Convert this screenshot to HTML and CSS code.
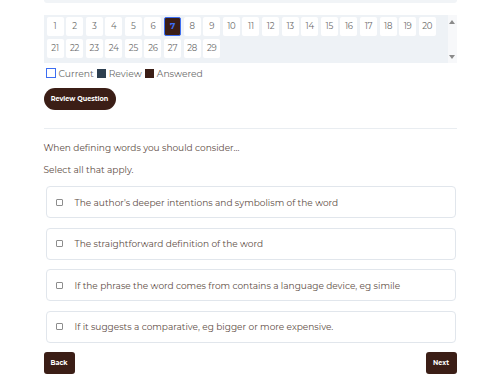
FILE: index.html
```html
<!DOCTYPE html>
<html lang="en">
<head>
    <meta charset="UTF-8">
    <title>Question 7</title>
    <link rel="stylesheet" href="styles.css">
</head>
<body>
<div class="page">
    <div class="topbar"></div>

    <div class="nav">
        <div class="nums">
            <span>1</span><span>2</span><span>3</span><span>4</span><span>5</span>
            <span>6</span><span class="cur">7</span><span>8</span><span>9</span><span>10</span>
            <span>11</span><span>12</span><span>13</span><span>14</span><span>15</span>
            <span>16</span><span>17</span><span>18</span><span>19</span><span>20</span>
            <span>21</span><span>22</span><span>23</span><span>24</span><span>25</span>
            <span>26</span><span>27</span><span>28</span><span>29</span>
        </div>
        <div class="bar">
            <i class="up"></i>
            <i class="down"></i>
        </div>
    </div>

    <div class="legend">
        <i class="sq sq-cur"></i>Current
        <i class="sq sq-rev"></i>Review
        <i class="sq sq-ans"></i>Answered
    </div>

    <button class="pill">Review Question</button>

    <div class="rule"></div>

    <p class="q">When defining words you should consider...</p>
    <p class="q">Select all that apply.</p>

    <ul class="opts">
        <li><i class="box"></i>The author's deeper intentions and symbolism of the word</li>
        <li><i class="box"></i>The straightforward definition of the word</li>
        <li><i class="box"></i>If the phrase the word comes from contains a language device, eg simile</li>
        <li><i class="box"></i>If it suggests a comparative, eg bigger or more expensive.</li>
    </ul>

    <div class="foot">
        <button class="btn">Back</button>
        <button class="btn">Next</button>
    </div>
</div>
</body>
</html>
```
FILE: styles.css
```css
* {
    margin: 0;
    padding: 0;
    list-style: none;
    box-sizing: border-box;
}

body {
    background: #fff;
    font-family: "Montserrat", "DejaVu Sans", sans-serif;
    color: #5e4d45;
}

.page {
    width: 413px;
    margin: 0 auto;
}

.topbar {
    height: 3px;
    background: #f1f4f7;
    border-radius: 0 0 3px 3px;
}

.nav {
    margin-top: 12px;
    height: 48px;
    display: flex;
}

.nums {
    flex: 1;
    background: #eef2f6;
    padding: 2px 3px;
    display: flex;
    flex-wrap: wrap;
    align-content: flex-start;
    column-gap: 2.6px;
    row-gap: 3px;
}

.nums span {
    width: 17px;
    height: 19px;
    background: #fff;
    border-radius: 2px;
    font-size: 8.5px;
    line-height: 19px;
    text-align: center;
    color: #6b6b6b;
    letter-spacing: -0.2px;
}

.nums .cur {
    background: #3b1e16;
    border: 1.5px solid #3d6ef2;
    color: #3d6ef2;
    font-weight: bold;
    line-height: 16px;
}

.bar {
    width: 9px;
    background: #f7f8fa;
    display: flex;
    flex-direction: column;
    justify-content: space-between;
    align-items: center;
    padding: 5px 0 4px;
}

.bar i {
    width: 0;
    height: 0;
    border-left: 3px solid transparent;
    border-right: 3px solid transparent;
}

.bar .up {
    border-bottom: 4px solid #8a8a8a;
}

.bar .down {
    border-top: 4px solid #8a8a8a;
}

.legend {
    margin-top: 4px;
    display: flex;
    align-items: center;
    font-size: 9.2px;
    color: #6a6a6a;
    height: 12px;
    padding-left: 2px;
}

.sq {
    width: 10px;
    height: 10px;
    margin-right: 3px;
    margin-left: 3px;
}

.sq-cur {
    margin-left: 0;
    border: 1.5px solid #3d6ef2;
    background: #fff;
}

.sq-rev {
    width: 9px;
    height: 9px;
    background: #2d3f50;
}

.sq-ans {
    width: 9px;
    height: 9px;
    background: #3b1e16;
}

.pill {
    display: block;
    margin-top: 9px;
    width: 72px;
    height: 22px;
    border: 0;
    border-radius: 11px;
    background: #3b1e16;
    color: #fff;
    font-family: inherit;
    font-size: 6.5px;
    font-weight: bold;
}

.rule {
    margin-top: 18px;
    height: 1px;
    background: #e9edf1;
}

.q {
    font-size: 9px;
    margin-top: 13px;
    line-height: 11px;
}

.q + .q {
    margin-top: 11px;
}

.opts {
    margin-top: 11px;
    padding: 0 1px 0 2px;
}

.opts li {
    height: 32px;
    border: 1px solid #e1e6ec;
    border-radius: 4px;
    display: flex;
    align-items: center;
    padding-left: 9px;
    font-size: 9px;
    margin-bottom: 9.5px;
}

.box {
    width: 7px;
    height: 7px;
    border: 1px solid #8d8d8d;
    border-radius: 1px;
    margin-right: 12px;
}

.foot {
    margin-top: 9px;
    display: flex;
    justify-content: space-between;
}

.btn {
    width: 31px;
    height: 22px;
    border: 0;
    border-radius: 3px;
    background: #3b1e16;
    color: #fff;
    font-family: inherit;
    font-size: 6.5px;
    font-weight: bold;
}
```
